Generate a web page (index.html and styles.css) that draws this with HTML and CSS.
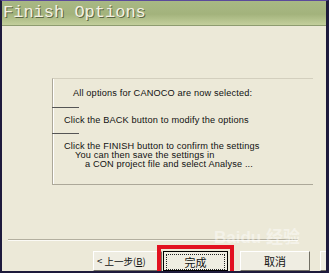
FILE: index.html
```html
<!DOCTYPE html>
<html lang="zh">
<head>
  <meta charset="UTF-8" />
  <title>Finish Options</title>
  <link rel="stylesheet" href="styles.css">
</head>
<body>
  <div class="window">
    <div class="header">Finish Options</div>

    <div class="content">
      <div class="panel">
        <div class="row row-first">All options for CANOCO are now selected:</div>
        <div class="divider"></div>
        <div class="row row-back">Click the BACK button to modify the options</div>
        <div class="divider"></div>
        <div class="row row-finish">
          <div>Click the FINISH button to confirm the settings</div>
          <div class="indent1">You can then save the settings in</div>
          <div class="indent2">a CON project file and select Analyse ...</div>
        </div>
      </div>
    </div>

    <div class="footer">
      <div class="rule"></div>
      <div class="buttons">
        <button class="btn btn-back">&lt; 上一步(<u>B</u>)</button>
        <button class="btn btn-default"><span class="focus">完成</span></button>
        <button class="btn btn-cancel">取消</button>
        <button class="btn btn-help"></button>
      </div>
    </div>

    <div class="watermark">Baidu 经验</div>
  </div>
</body>
</html>
```

FILE: styles.css
```css
body {
  margin: 0;
  background: #ece9d8;
}
.window {
  position: relative;
  width: 329px;
  height: 273px;
  box-sizing: border-box;
  border-top: 1px solid #5b4a9b;
  border-left: 2px solid #1d1a3c;
  border-right: 3px solid #1d1a3c;
  border-bottom: 2px solid #1d1a3c;
  background: #ece9d8;
  overflow: hidden;
  font-family: "Liberation Sans", Arial, sans-serif;
}
.header {
  height: 24px;
  padding-left: 1px;
  background: linear-gradient(#a8b884, #a3b37c 55%, #c3cf9c);
  border-bottom: 1px solid #8e9c70;
  font-family: "Liberation Mono", monospace;
  font-size: 17px;
  line-height: 24px;
  color: #f3f1e2;
  text-shadow: 1px 1px 0 #5c6644;
}
.content {
  height: 213px;
  padding: 52px 0 0 50px;
  box-sizing: border-box;
}
.panel {
  width: 260px;
  border-top: 1px solid #d3cfbe;
  border-left: 1px solid #aca899;
  border-bottom: 1px solid #aca899;
  box-shadow: inset 1px 0 0 #fff;
  font-size: 9.2px;
  letter-spacing: 0.15px;
  color: #111;
}
.row {
  padding-left: 11px;
}
.row-first {
  height: 28px;
  line-height: 28px;
  padding-left: 20px;
}
.row-back {
  height: 25px;
  line-height: 25px;
}
.row-finish {
  height: 50px;
  padding-top: 8px;
  box-sizing: border-box;
  line-height: 9.2px;
}
.indent1 {
  padding-left: 11px;
}
.indent2 {
  padding-left: 21px;
}
.divider {
  width: 27px;
  height: 1px;
  margin-left: -1px;
  background: #555;
}
.footer {
  padding-left: 6px;
}
.rule {
  width: 290px;
  height: 1px;
  background: #b3af9f;
  border-bottom: 1px solid #fbfaf5;
}
.buttons {
  display: flex;
  margin-top: 10px;
  padding-left: 85px;
}
.btn {
  flex-shrink: 0;
  height: 20px;
  padding: 0;
  background: #efede2;
  border: 1px solid;
  border-color: #fff #716f64 #716f64 #fff;
  font-family: "Noto Sans CJK SC", sans-serif;
  font-size: 11px;
  color: #111;
  line-height: 16px;
  white-space: nowrap;
}
.btn-back {
  width: 69px;
  padding-left: 3px;
  text-align: left;
  font-size: 9.5px;
}
.btn-default {
  width: 65px;
  margin-left: 1px;
  border: 1px solid #000;
  padding: 2px;
  outline: 4px solid #e21120;
  outline-offset: 2px;
}
.focus {
  display: block;
  height: 14px;
  line-height: 14px;
  border: 1px dotted #222;
}
.btn-cancel {
  width: 70px;
  margin-left: 12px;
}
.btn-help {
  width: 20px;
  margin-left: 10px;
}
.watermark {
  position: absolute;
  left: 212px;
  top: 222px;
  font-family: "Liberation Sans", "Noto Sans CJK SC", sans-serif;
  font-size: 17px;
  font-weight: bold;
  color: rgba(255, 255, 255, 0.45);
  white-space: nowrap;
}
```
